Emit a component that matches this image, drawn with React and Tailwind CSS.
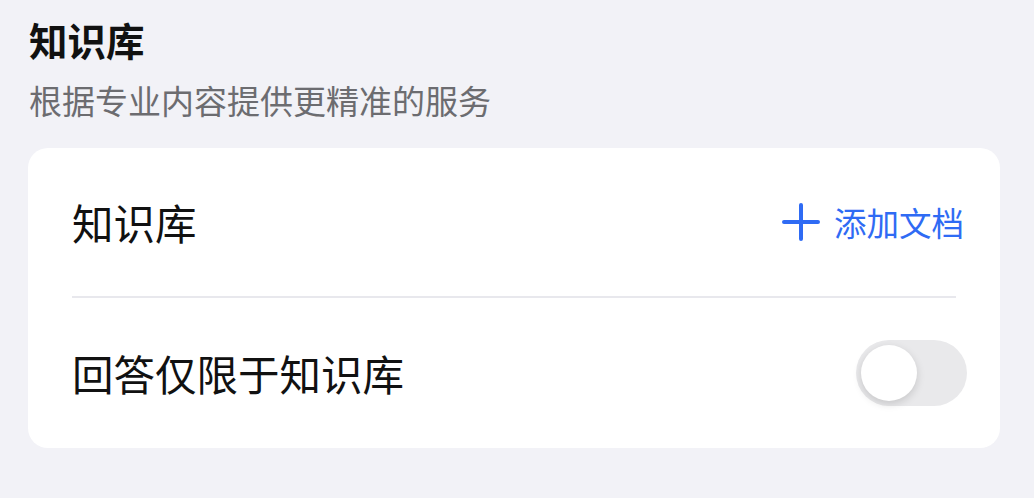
export default function App() {
    return (
        <div className="w-[1034px] h-[498px] bg-[#f2f2f7] overflow-hidden" style={{ fontFamily: '"Noto Sans CJK SC", "Noto Sans", sans-serif' }}>
            <div className="pl-[29px] pt-[15px]">
                <div className="h-[48px] leading-[48px] text-[38.5px] font-semibold text-[#111111]">知识库</div>
                <div className="mt-[15px] h-[44px] leading-[44px] text-[33px] text-[#6c6c70]">根据专业内容提供更精准的服务</div>
            </div>

            <div className="mx-[28px] mt-[26px] w-[972px] bg-white rounded-[20px]">
                <div className="flex items-center justify-between h-[148px] pl-[44px] pr-[36px]">
                    <span className="text-[41.5px] text-[#111111]">知识库</span>
                    <button className="flex items-center gap-[13px] text-[#2f6bf4]">
                        <svg width="40" height="40" viewBox="0 0 40 40" fill="none" stroke="currentColor" strokeWidth="4" strokeLinecap="round">
                            <path d="M20 3v34M3 20h34" />
                        </svg>
                        <span className="text-[32.5px]">添加文档</span>
                    </button>
                </div>
                <div className="mx-[44px] h-[2px] bg-[#e8e8ed]" />
                <div className="flex items-center justify-between h-[150px] pl-[44px] pr-[33px]">
                    <span className="text-[41.5px] text-[#111111]">回答仅限于知识库</span>
                    <div className="relative w-[111px] h-[66px] rounded-full bg-[#e9e9eb]">
                        <div className="absolute left-[5px] top-[5px] w-[56px] h-[56px] rounded-full bg-white shadow-[0_3px_8px_rgba(0,0,0,0.15)]" />
                    </div>
                </div>
            </div>
        </div>
    );
}
